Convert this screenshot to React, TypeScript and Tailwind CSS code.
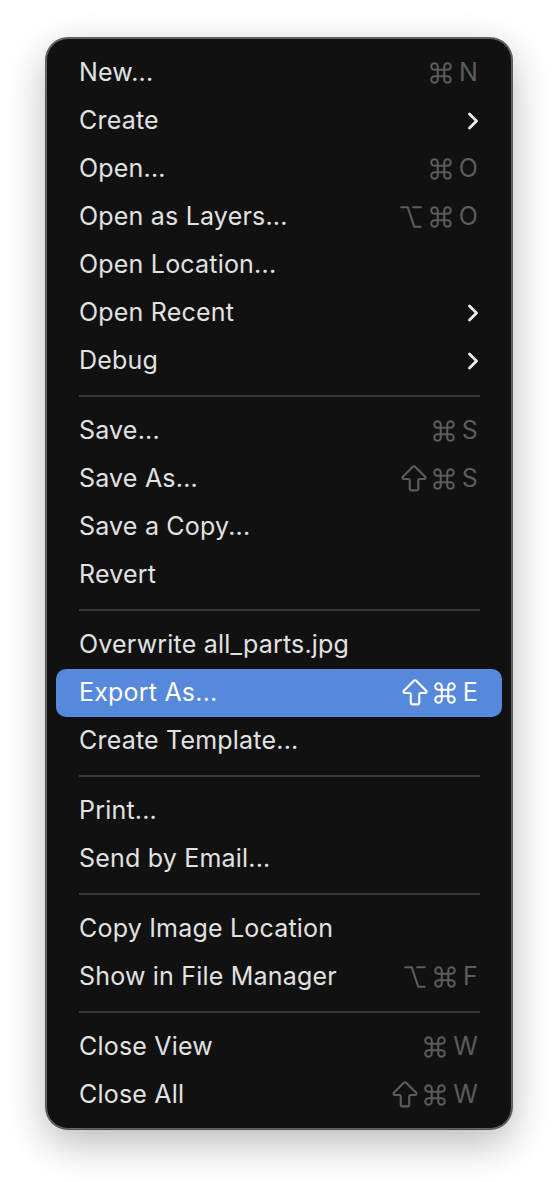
import { ArrowBigUp, ChevronRight, Command, Option } from 'lucide-react';

type Mod = 'shift' | 'opt' | 'cmd';

type Item =
  | { kind: 'item'; label: string; mods?: Mod[]; keyChar?: string; sub?: boolean; active?: boolean }
  | { kind: 'sep' };

const MENU: Item[] = [
  { kind: 'item', label: 'New...', mods: ['cmd'], keyChar: 'N' },
  { kind: 'item', label: 'Create', sub: true },
  { kind: 'item', label: 'Open...', mods: ['cmd'], keyChar: 'O' },
  { kind: 'item', label: 'Open as Layers...', mods: ['opt', 'cmd'], keyChar: 'O' },
  { kind: 'item', label: 'Open Location...' },
  { kind: 'item', label: 'Open Recent', sub: true },
  { kind: 'item', label: 'Debug', sub: true },
  { kind: 'sep' },
  { kind: 'item', label: 'Save...', mods: ['cmd'], keyChar: 'S' },
  { kind: 'item', label: 'Save As...', mods: ['shift', 'cmd'], keyChar: 'S' },
  { kind: 'item', label: 'Save a Copy...' },
  { kind: 'item', label: 'Revert' },
  { kind: 'sep' },
  { kind: 'item', label: 'Overwrite all_parts.jpg' },
  { kind: 'item', label: 'Export As...', mods: ['shift', 'cmd'], keyChar: 'E', active: true },
  { kind: 'item', label: 'Create Template...' },
  { kind: 'sep' },
  { kind: 'item', label: 'Print...' },
  { kind: 'item', label: 'Send by Email...' },
  { kind: 'sep' },
  { kind: 'item', label: 'Copy Image Location' },
  { kind: 'item', label: 'Show in File Manager', mods: ['opt', 'cmd'], keyChar: 'F' },
  { kind: 'sep' },
  { kind: 'item', label: 'Close View', mods: ['cmd'], keyChar: 'W' },
  { kind: 'item', label: 'Close All', mods: ['shift', 'cmd'], keyChar: 'W' },
];

function ModIcon({ mod }: { mod: Mod }) {
  if (mod === 'cmd') return <Command size={26} strokeWidth={1.9} className="-mx-[2px]" />;
  if (mod === 'opt') return <Option size={26} strokeWidth={2} className="-mx-[2px]" />;
  return <ArrowBigUp size={34} strokeWidth={1.5} className="-mx-[6px]" />;
}

function Row({ item }: { item: Extract<Item, { kind: 'item' }> }) {
  return (
    <div
      className={
        item.active
          ? 'flex h-12 items-center rounded-[10px] bg-[#5688db] pl-[23px] pr-[24px] text-white'
          : 'flex h-12 items-center pl-[23px] pr-[24px] text-[#e2e2e2]'
      }
    >
      <span className="flex-1 whitespace-nowrap">{item.label}</span>
      {item.mods && (
        <span
          className={
            item.active
              ? 'flex items-center gap-[7px] text-white'
              : 'flex items-center gap-[7px] text-[#5c5c5c]'
          }
        >
          <span className="flex items-center gap-[8px]">
            {item.mods.map((m) => (
              <ModIcon key={m} mod={m} />
            ))}
          </span>
          <span>{item.keyChar}</span>
        </span>
      )}
      {item.sub && <ChevronRight size={28} strokeWidth={2.4} className="-mr-[9px] text-[#ececec]" />}
    </div>
  );
}

export default function App() {
  return (
    <div className="h-[1182px] w-[558px] overflow-hidden bg-white pt-[38px] pl-[46px] font-['Inter','Liberation_Sans',sans-serif] text-[25px] leading-normal tracking-[0.2px]">
      <div className="w-[466px] rounded-[22px] border border-[#666] bg-[#111111] px-[9px] pt-[10px] pb-[9px] shadow-[0_14px_40px_rgba(0,0,0,0.28)] ring-1 ring-black/60">
        {MENU.map((item, i) =>
          item.kind === 'sep' ? (
            <div key={i} className="flex h-[22px] items-center pl-[23px] pr-[22px]">
              <div className="h-[2px] w-full bg-[#383838]" />
            </div>
          ) : (
            <Row key={i} item={item} />
          ),
        )}
      </div>
    </div>
  );
}
